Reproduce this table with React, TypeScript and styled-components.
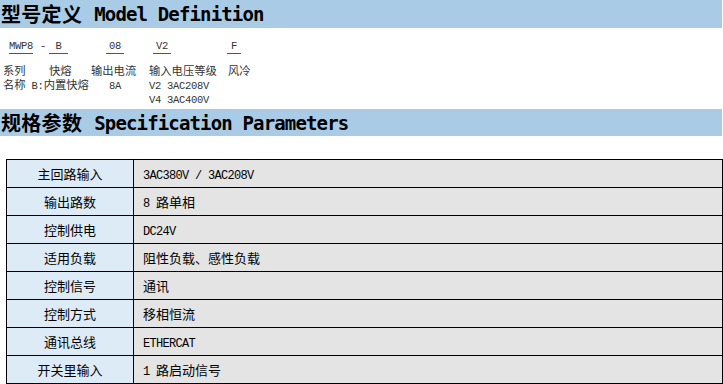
import styled, { createGlobalStyle } from "styled-components";

const GlobalStyle = createGlobalStyle`
  body {
    margin: 0;
    background: #ffffff;
    font-family: "Noto Sans CJK SC", sans-serif;
    color: #000;
  }
`;

function specRows() {
  return [
    { label: "主回路输入", value: <Lat>3AC380V / 3AC208V</Lat> },
    { label: "输出路数", value: <><Lat>8 </Lat>路单相</> },
    { label: "控制供电", value: <Lat>DC24V</Lat> },
    { label: "适用负载", value: "阻性负载、感性负载" },
    { label: "控制信号", value: "通讯" },
    { label: "控制方式", value: "移相恒流" },
    { label: "通讯总线", value: <Lat>ETHERCAT</Lat> },
    { label: "开关里输入", value: <><Lat>1 </Lat>路启动信号</> },
  ];
}

export default function App() {
  return (
    <Page>
      <GlobalStyle />
      <SectionTitle>
        <TitleCn>型号定义</TitleCn>
        <TitleEn>Model Definition</TitleEn>
      </SectionTitle>

      <ModelGrid>
        <Cell>
          <Code $offset={6} $width={24}>MWP8</Code>
          <Dash>-</Dash>
        </Cell>
        <Cell>
          <Code $offset={0} $width={19}>B</Code>
        </Cell>
        <Cell>
          <Code $offset={15} $width={18}>08</Code>
        </Cell>
        <Cell>
          <Code $offset={4} $width={18}>V2</Code>
        </Cell>
        <Cell>
          <Code $offset={-1} $width={14}>F</Code>
        </Cell>

        <Label>系列</Label>
        <Label>快熔</Label>
        <Label>输出电流</Label>
        <Label>输入电压等级</Label>
        <Label>风冷</Label>

        <Label $span={2}>名称<Lat> B:</Lat>内置快熔</Label>
        <Label $indent={18}><Lat>8A</Lat></Label>
        <Label><Lat>V2 3AC208V</Lat></Label>
        <Label />

        <Label $span={3} />
        <Label><Lat>V4 3AC400V</Lat></Label>
        <Label />
      </ModelGrid>

      <SectionTitle $gap>
        <TitleCn>规格参数</TitleCn>
        <TitleEn>Specification Parameters</TitleEn>
      </SectionTitle>

      <SpecTable>
        <tbody>
          {specRows().map((row) => (
            <tr key={row.label}>
              <KeyCell>{row.label}</KeyCell>
              <ValueCell>{row.value}</ValueCell>
            </tr>
          ))}
        </tbody>
      </SpecTable>
    </Page>
  );
}

const Page = styled.div`
  width: 723px;
  height: 384px;
  overflow: hidden;
  display: flex;
  flex-direction: column;
`;

const SectionTitle = styled.div<{ $gap?: boolean }>`
  flex: none;
  width: 722px;
  height: ${(p) => (p.$gap ? "27px" : "28px")};
  margin-top: ${(p) => (p.$gap ? "4px" : "0")};
  background: #a9cbe6;
  display: flex;
  align-items: center;
  gap: 12px;
  padding-left: 1px;
  box-sizing: border-box;
  white-space: nowrap;
`;

const TitleCn = styled.span`
  font-family: "Noto Sans CJK SC", sans-serif;
  font-weight: 700;
  font-size: 20px;
  line-height: 28px;
  letter-spacing: 0.3px;
`;

const TitleEn = styled.span`
  font-family: "DejaVu Sans Mono", monospace;
  font-weight: 700;
  font-size: 19px;
  letter-spacing: -0.85px;
  line-height: 28px;
`;

const ModelGrid = styled.div`
  flex: none;
  display: grid;
  grid-template-columns: 46px 42px 58px 79px auto;
  grid-template-rows: 24px 14px 14px 14px;
  padding-left: 3px;
  padding-top: 11px;
  font-family: "Noto Sans CJK SC", sans-serif;
  font-size: 11.3px;
  color: #333;
`;

const Cell = styled.div`
  display: flex;
  align-items: flex-start;
`;

const Code = styled.span<{ $offset: number; $width: number }>`
  margin-left: ${(p) => p.$offset}px;
  width: ${(p) => p.$width}px;
  height: 14px;
  border-bottom: 1px solid #555;
  text-align: center;
  font-family: "Liberation Mono", monospace;
  font-size: 10.5px;
  letter-spacing: -0.3px;
  line-height: 14px;
`;

const Dash = styled.span`
  margin-left: 7px;
  font-family: "Liberation Mono", monospace;
  font-size: 10.5px;
  line-height: 14px;
`;

const Label = styled.div<{ $span?: number; $indent?: number }>`
  grid-column: span ${(p) => p.$span ?? 1};
  padding-left: ${(p) => p.$indent ?? 0}px;
  line-height: 14px;
  white-space: nowrap;
`;

const Lat = styled.span`
  font-family: "Liberation Mono", monospace;
  font-size: 10.5px;
  letter-spacing: -0.3px;
`;

const SpecTable = styled.table`
  flex: none;
  margin: 23px 0 0 6px;
  width: 717px;
  border-collapse: collapse;
  font-size: 13px;

  ${Lat} {
    font-size: 12px;
    letter-spacing: -0.7px;
  }
`;

const KeyCell = styled.td`
  width: 126px;
  height: 27px;
  padding: 0;
  border: 1px solid #000;
  background: #ddebf7;
  text-align: center;
  vertical-align: middle;
`;

const ValueCell = styled.td`
  height: 27px;
  padding: 0 0 0 9px;
  border: 1px solid #000;
  background: #e4e4e4;
  vertical-align: middle;
`;
